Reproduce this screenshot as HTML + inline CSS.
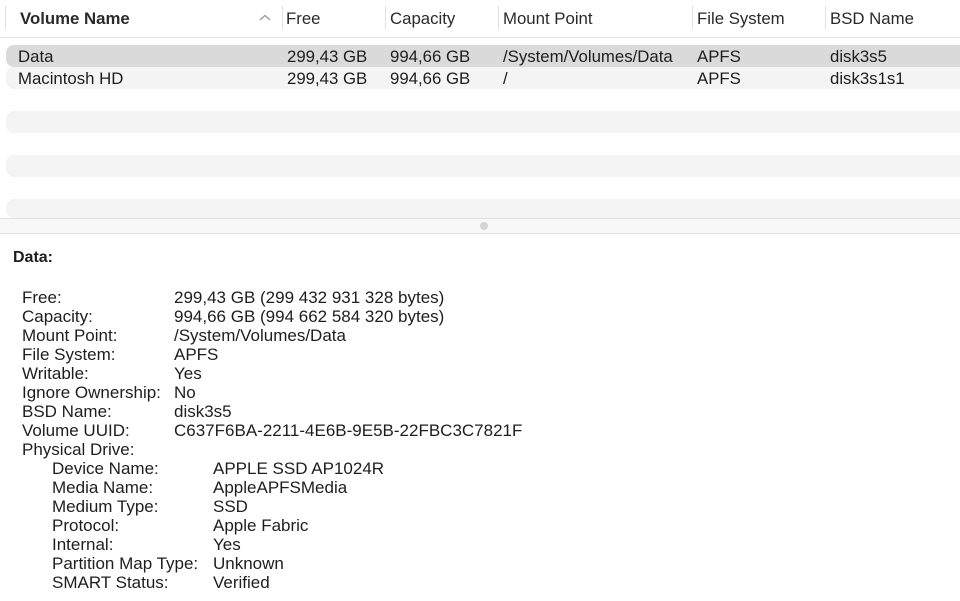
<!DOCTYPE html>
<html><head><style>
body{margin:0;width:960px;height:601px;background:#fff;font-family:"Liberation Sans",Helvetica,sans-serif;color:#1e1e1e;overflow:hidden;position:relative}
.a{position:absolute;white-space:nowrap}
.h{font-size:16.8px;top:9px;color:#2a2a2a}
.sep{position:absolute;top:6px;width:1px;height:24px;background:#e2e2e2}
.row{position:absolute;left:6px;width:960px;height:22px;border-radius:8px 0 0 8px}
.c{font-size:16.8px}
.d{font-size:17px}
</style></head><body>
<div class="a h" style="left:20px;font-weight:bold">Volume Name</div>
<svg class="a" style="left:259px;top:14px" width="12" height="8"><path d="M1 6 L6 1.5 L11 6" fill="none" stroke="#999" stroke-width="1.3"/></svg>
<div class="sep" style="left:5px"></div>
<div class="sep" style="left:282px"></div><div class="a h" style="left:286px">Free</div>
<div class="sep" style="left:385px"></div><div class="a h" style="left:390px">Capacity</div>
<div class="sep" style="left:498px"></div><div class="a h" style="left:503px">Mount Point</div>
<div class="sep" style="left:692px"></div><div class="a h" style="left:697px">File System</div>
<div class="sep" style="left:825px"></div><div class="a h" style="left:830px">BSD Name</div>
<div class="a" style="left:0;top:37px;width:960px;height:1px;background:#e4e4e4"></div>
<div class="row" style="top:45px;background:#dadada"></div>
<div class="row" style="top:67px;background:#f4f4f4"></div>
<div class="row" style="top:111px;background:#f4f4f4"></div>
<div class="row" style="top:155px;background:#f4f4f4"></div>
<div class="row" style="top:199px;height:19px;background:#f4f4f4"></div>
<div class="a c" style="left:18px;top:47px">Data</div>
<div class="a c" style="left:287px;top:47px">299,43 GB</div>
<div class="a c" style="left:390px;top:47px">994,66 GB</div>
<div class="a c" style="left:503px;top:47px">/System/Volumes/Data</div>
<div class="a c" style="left:697px;top:47px">APFS</div>
<div class="a c" style="left:830px;top:47px">disk3s5</div>
<div class="a c" style="left:18px;top:69px">Macintosh HD</div>
<div class="a c" style="left:287px;top:69px">299,43 GB</div>
<div class="a c" style="left:390px;top:69px">994,66 GB</div>
<div class="a c" style="left:503px;top:69px">/</div>
<div class="a c" style="left:697px;top:69px">APFS</div>
<div class="a c" style="left:830px;top:69px">disk3s1s1</div>
<div class="a" style="left:0;top:218px;width:960px;height:14px;background:#f8f8f8;border-top:1px solid #e0e0e0;border-bottom:1px solid #e0e0e0"></div>
<div class="a" style="left:480px;top:222px;width:8px;height:8px;border-radius:50%;background:#d4d4d4"></div>
<div class="a d" style="left:13px;top:249px;font-weight:bold;font-size:16px">Data:</div>
<div class="a d" style="left:22px;top:288px;line-height:19px">Free:<br>Capacity:<br>Mount Point:<br>File System:<br>Writable:<br>Ignore Ownership:<br>BSD Name:<br>Volume UUID:<br>Physical Drive:</div>
<div class="a d" style="left:174px;top:288px;line-height:19px">299,43 GB (299 432 931 328 bytes)<br>994,66 GB (994 662 584 320 bytes)<br>/System/Volumes/Data<br>APFS<br>Yes<br>No<br>disk3s5<br>C637F6BA-2211-4E6B-9E5B-22FBC3C7821F</div>
<div class="a d" style="left:52px;top:459px;line-height:19px">Device Name:<br>Media Name:<br>Medium Type:<br>Protocol:<br>Internal:<br>Partition Map Type:<br>SMART Status:</div>
<div class="a d" style="left:213px;top:459px;line-height:19px">APPLE SSD AP1024R<br>AppleAPFSMedia<br>SSD<br>Apple Fabric<br>Yes<br>Unknown<br>Verified</div>
</body></html>
